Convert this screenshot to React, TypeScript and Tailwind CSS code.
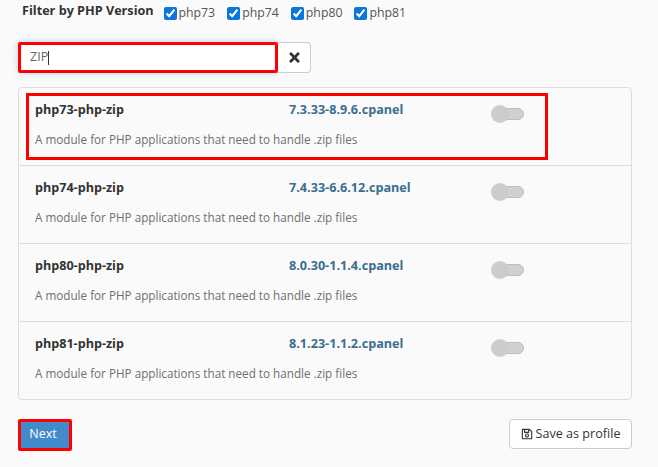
import { FaRegSave, FaTimes } from "react-icons/fa";

const VERSIONS = ["php73", "php74", "php80", "php81"];

const PACKAGES = [
  { name: "php73-php-zip", version: "7.3.33-8.9.6.cpanel", marked: true },
  { name: "php74-php-zip", version: "7.4.33-6.6.12.cpanel", marked: false },
  { name: "php80-php-zip", version: "8.0.30-1.1.4.cpanel", marked: false },
  { name: "php81-php-zip", version: "8.1.23-1.1.2.cpanel", marked: false },
];

function Toggle() {
  return (
    <div className="relative w-[33px] h-[18px] flex items-center">
      <div className="ml-[14px] w-[19px] h-[12px] rounded-r-full bg-[#d0d0d0] border border-[#bdbdbd]" />
      <div className="absolute left-0 top-0 w-[18px] h-[18px] rounded-full bg-[#cccccc]" />
    </div>
  );
}

export default function App() {
  return (
    <div className="w-[658px] h-[467px] overflow-hidden bg-[#fafafa] text-[#333] font-['Open_Sans',sans-serif] text-[12px] pl-[18px] pr-[26px]">
      <div className="flex items-start h-[42px] pl-1 pt-[1px]">
        <span className="font-bold text-[12.65px] leading-[18px] w-[141.5px]">Filter by PHP Version</span>
        <div className="flex gap-[12px] pt-[3px]">
          {VERSIONS.map((v) => (
            <label key={v} className="flex items-center gap-[2px] text-[12.3px] leading-[18px] text-[#555]">
              <input type="checkbox" defaultChecked className="w-[13px] h-[13px] m-0 accent-[#0b75e0]" />
              {v}
            </label>
          ))}
        </div>
      </div>

      <div className="flex w-[293px] h-[31px]">
        <div className="w-[260px] border-[3px] border-[#ff0000] rounded-[2px] bg-white flex items-center pl-[9px] text-[12.5px] text-[#666] shadow-[0_0_6px_rgba(102,175,233,0.5)]">
          ZIP
          <span className="w-px h-[14px] bg-[#333]" />
        </div>
        <button className="flex-1 flex items-center justify-center bg-white border border-[#ccc] border-l-0 rounded-r-[4px] text-[#333]">
          <FaTimes size={15} />
        </button>
      </div>

      <div className="mt-[14px] w-[614px] border border-[#ddd] rounded-[4px] bg-[#fafafa]">
        {PACKAGES.map((p, i) => (
          <div
            key={p.name}
            className={`relative pl-[16px] pt-[12px] ${i > 0 ? "h-[78px] border-t border-[#ddd]" : "h-[77px]"}`}
          >
            <div className="flex items-start h-[18px]">
              <span className="w-[254px] pt-[1px] font-bold text-[12.6px] leading-[18px] text-[#333]">{p.name}</span>
              <span className="w-[202px] font-bold text-[12.65px] leading-[18px] text-[#3a6f8f]">{p.version}</span>
              <div className="mt-[5px]">
                <Toggle />
              </div>
            </div>
            <p className="mt-[12px] text-[11.7px] leading-[18px] text-[#6f6f6f]">
              A module for PHP applications that need to handle .zip files
            </p>
            {p.marked && (
              <div className="absolute left-[7px] top-[5px] w-[522px] h-[67px] border-[3px] border-[#ff0000]" />
            )}
          </div>
        ))}
      </div>

      <div className="mt-[19px] w-[614px] flex items-start justify-between">
        <button className="w-[54px] h-[32px] pb-[2px] pr-[4px] bg-[#428bca] border-[3px] border-[#ff0000] rounded-[2px] text-white text-[12.5px]">
          Next
        </button>
        <button className="w-[123px] h-[30px] bg-white border border-[#ccc] rounded-[4px] flex items-center justify-center gap-[3px] text-[12.6px] text-[#333]">
          <FaRegSave size={12} />
          Save as profile
        </button>
      </div>
    </div>
  );
}
